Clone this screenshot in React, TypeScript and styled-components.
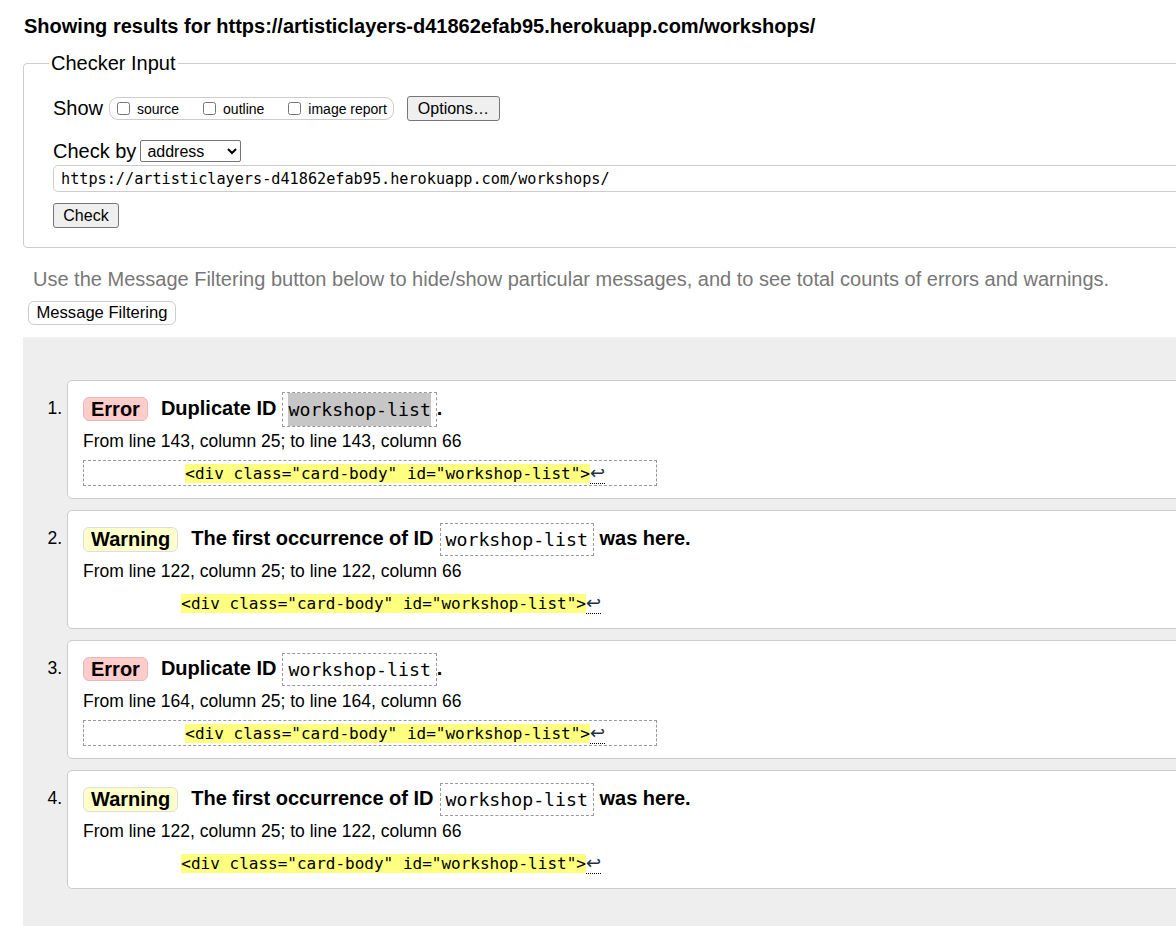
import { FC } from "react";
import styled, { createGlobalStyle } from "styled-components";

const URL = "https://artisticlayers-d41862efab95.herokuapp.com/workshops/";
const EXTRACT = '<div class="card-body" id="workshop-list">';

interface IMessage {
  kind: "error" | "warning";
  before: string;
  after: string;
  from: string;
  hl?: boolean;
}

const messages: IMessage[] = [
  { kind: "error", before: "Duplicate ID", after: ".", from: "From line 143, column 25; to line 143, column 66", hl: true },
  { kind: "warning", before: "The first occurrence of ID", after: " was here.", from: "From line 122, column 25; to line 122, column 66" },
  { kind: "error", before: "Duplicate ID", after: ".", from: "From line 164, column 25; to line 164, column 66" },
  { kind: "warning", before: "The first occurrence of ID", after: " was here.", from: "From line 122, column 25; to line 122, column 66" },
];

const Message: FC<{ msg: IMessage; n: number }> = ({ msg, n }) => (
  <Item>
    <Num>{n}.</Num>
    <Card>
      <TitleRow>
        <Badge $kind={msg.kind}>{msg.kind === "error" ? "Error" : "Warning"}</Badge>
        <Title>
          {msg.before}
          <Code>
            <CodeText $hl={msg.hl}>workshop-list</CodeText>
          </Code>
          {msg.after}
        </Title>
      </TitleRow>
      <FromLine>{msg.from}</FromLine>
      <Extract $boxed={msg.kind === "error"}>
        {"          "}
        <Mark>{EXTRACT}</Mark>
        <Return>↩</Return>
      </Extract>
    </Card>
  </Item>
);

export default function App() {
  return (
    <Page>
      <GlobalStyle />
      <Heading>Showing results for {URL}</Heading>

      <Fieldset>
        <Legend>Checker Input</Legend>
        <Row>
          <Label>Show</Label>
          <CheckGroup>
            <CheckLabel><input type="checkbox" />source</CheckLabel>
            <CheckLabel><input type="checkbox" />outline</CheckLabel>
            <CheckLabel><input type="checkbox" />image report</CheckLabel>
          </CheckGroup>
          <OptionsButton>Options…</OptionsButton>
        </Row>
        <ByRow>
          <Label>Check by</Label>
          <Select defaultValue="address">
            <option value="address">address</option>
          </Select>
        </ByRow>
        <UrlInput defaultValue={URL} />
        <CheckButton>Check</CheckButton>
      </Fieldset>

      <Hint>Use the Message Filtering button below to hide/show particular messages, and to see total counts of errors and warnings.</Hint>
      <FilterButton>Message Filtering</FilterButton>

      <Results>
        <List>
          {messages.map((m, i) => <Message msg={m} n={i + 1} key={i} />)}
        </List>
      </Results>
    </Page>
  );
}

const GlobalStyle = createGlobalStyle`
  body {
    margin: 0;
    background: #fff;
    color: #000;
    font-family: "Liberation Sans", Arial, sans-serif;
    overflow: hidden;
  }
`
const Page = styled.div`
  width: 1500px;
  padding-left: 23px;
`
const Heading = styled.h2`
  margin: 14px 0 0 1px;
  font-size: 20px;
  line-height: 24px;
  font-weight: bold;
`
const Fieldset = styled.fieldset`
  margin: 13px 0 0;
  border: 1px solid #ccc;
  border-radius: 4px;
  padding: 21px 0 19px 29px;
  min-inline-size: 0;
`
const Legend = styled.legend`
  font-size: 20px;
  line-height: 24px;
  padding: 0 2px;
  margin-left: -4px;
`
const Row = styled.div`
  display: flex;
  align-items: center;
  height: 25px;
`
const ByRow = styled(Row)`
  height: 22px;
  margin-top: 19px;
`
const Label = styled.span`
  font-size: 20px;
  margin-right: 6px;
`
const CheckGroup = styled.div`
  display: flex;
  align-items: center;
  gap: 24px;
  height: 23px;
  box-sizing: border-box;
  border: 1px solid #ccc;
  border-radius: 9px;
  padding: 0 6px 0 7px;
`
const CheckLabel = styled.label`
  display: flex;
  align-items: center;
  font-size: 14px;
  input {
    margin: 0 7px 0 0;
    width: 13px;
    height: 13px;
  }
`
const Button = styled.button`
  height: 25px;
  box-sizing: border-box;
  padding: 0;
  font-family: "Liberation Sans", Arial, sans-serif;
  font-size: 16px;
  color: #000;
  background: #efefef;
  border: 1px solid #767676;
  border-radius: 3px;
`
const OptionsButton = styled(Button)`
  width: 93px;
  margin-left: 13px;
`
const Select = styled.select`
  width: 101px;
  height: 22px;
  margin-left: -2px;
  font-family: "Liberation Sans", Arial, sans-serif;
  font-size: 16px;
  border: 1px solid #767676;
  border-radius: 2px;
  background: #fff;
  padding: 0 2px;
`
const UrlInput = styled.input`
  display: block;
  margin-top: 3px;
  width: 1400px;
  height: 27px;
  box-sizing: border-box;
  border: 1px solid #ccc;
  border-radius: 5px;
  padding: 0 7px;
  font-family: "DejaVu Sans Mono", monospace;
  font-size: 15.2px;
  color: #000;
`
const CheckButton = styled(Button)`
  display: block;
  width: 66px;
  margin-top: 11px;
`
const Hint = styled.p`
  margin: 20px 0 0 10px;
  font-size: 20px;
  line-height: 23px;
  color: #777;
`
const FilterButton = styled.button`
  display: block;
  margin: 10px 0 0 5px;
  height: 24px;
  width: 148px;
  padding: 0;
  font-family: "Liberation Sans", Arial, sans-serif;
  font-size: 16.6px;
  color: #000;
  background: #fff;
  border: 1px solid #ccc;
  border-radius: 6px;
`
const Results = styled.div`
  margin-top: 12px;
  background: #eee;
  padding: 43px 0 60px;
`
const List = styled.ol`
  list-style: none;
  margin: 0;
  padding: 0;
`
const Item = styled.li`
  display: flex;
  margin-bottom: 11px;
`
const Num = styled.span`
  width: 44px;
  flex-shrink: 0;
  box-sizing: border-box;
  padding: 18px 5px 0 0;
  text-align: right;
  font-size: 17.5px;
  line-height: 20px;
`
const Card = styled.div`
  flex: 1;
  background: #fff;
  border: 1px solid #ccc;
  border-radius: 5px;
  padding: 10px 15px 12px;
`
const TitleRow = styled.div`
  display: flex;
  align-items: center;
  height: 36px;
`
const Badge = styled.span<{ $kind: "error" | "warning" }>`
  box-sizing: border-box;
  height: ${p => (p.$kind === "error" ? 24 : 25)}px;
  line-height: ${p => (p.$kind === "error" ? 22 : 23)}px;
  padding: 0 7px;
  font-size: 20px;
  font-weight: bold;
  border-radius: 6px;
  background: ${p => (p.$kind === "error" ? "#ffcccc" : "#ffffcc")};
  border: 1px solid ${p => (p.$kind === "error" ? "#e6b8b8" : "#ddd")};
`
const Title = styled.span`
  margin-left: 13px;
  font-size: 20px;
  font-weight: bold;
  white-space: pre;
`
const Code = styled.code`
  display: inline-block;
  vertical-align: middle;
  margin-left: 6px;
  padding: 0 5px;
  border: 1px dashed #999;
  font-family: "DejaVu Sans Mono", monospace;
  font-size: 18.2px;
  font-weight: normal;
  line-height: 31px;
`
const CodeText = styled.span<{ $hl?: boolean }>`
  display: inline-block;
  ${p => p.$hl && `
    background: #c6c6c6;
    line-height: 33px;
  `}
`
const FromLine = styled.div`
  margin-top: 4px;
  font-size: 17.5px;
  line-height: 20px;
`
const Extract = styled.div<{ $boxed: boolean }>`
  margin-top: 9px;
  width: 574px;
  height: 26px;
  box-sizing: border-box;
  white-space: pre;
  font-family: "DejaVu Sans Mono", monospace;
  font-size: 16px;
  line-height: 24px;
  padding-left: ${p => (p.$boxed ? 5 : 1)}px;
  border: 1px ${p => (p.$boxed ? "dashed #999" : "solid transparent")};
`
const Mark = styled.mark`
  background: #ffff80;
  color: #000;
`
const Return = styled.span`
  font-family: "DejaVu Sans", sans-serif;
  font-size: 18px;
  color: #1f2f3f;
  border-bottom: 1px dotted #000;
`
